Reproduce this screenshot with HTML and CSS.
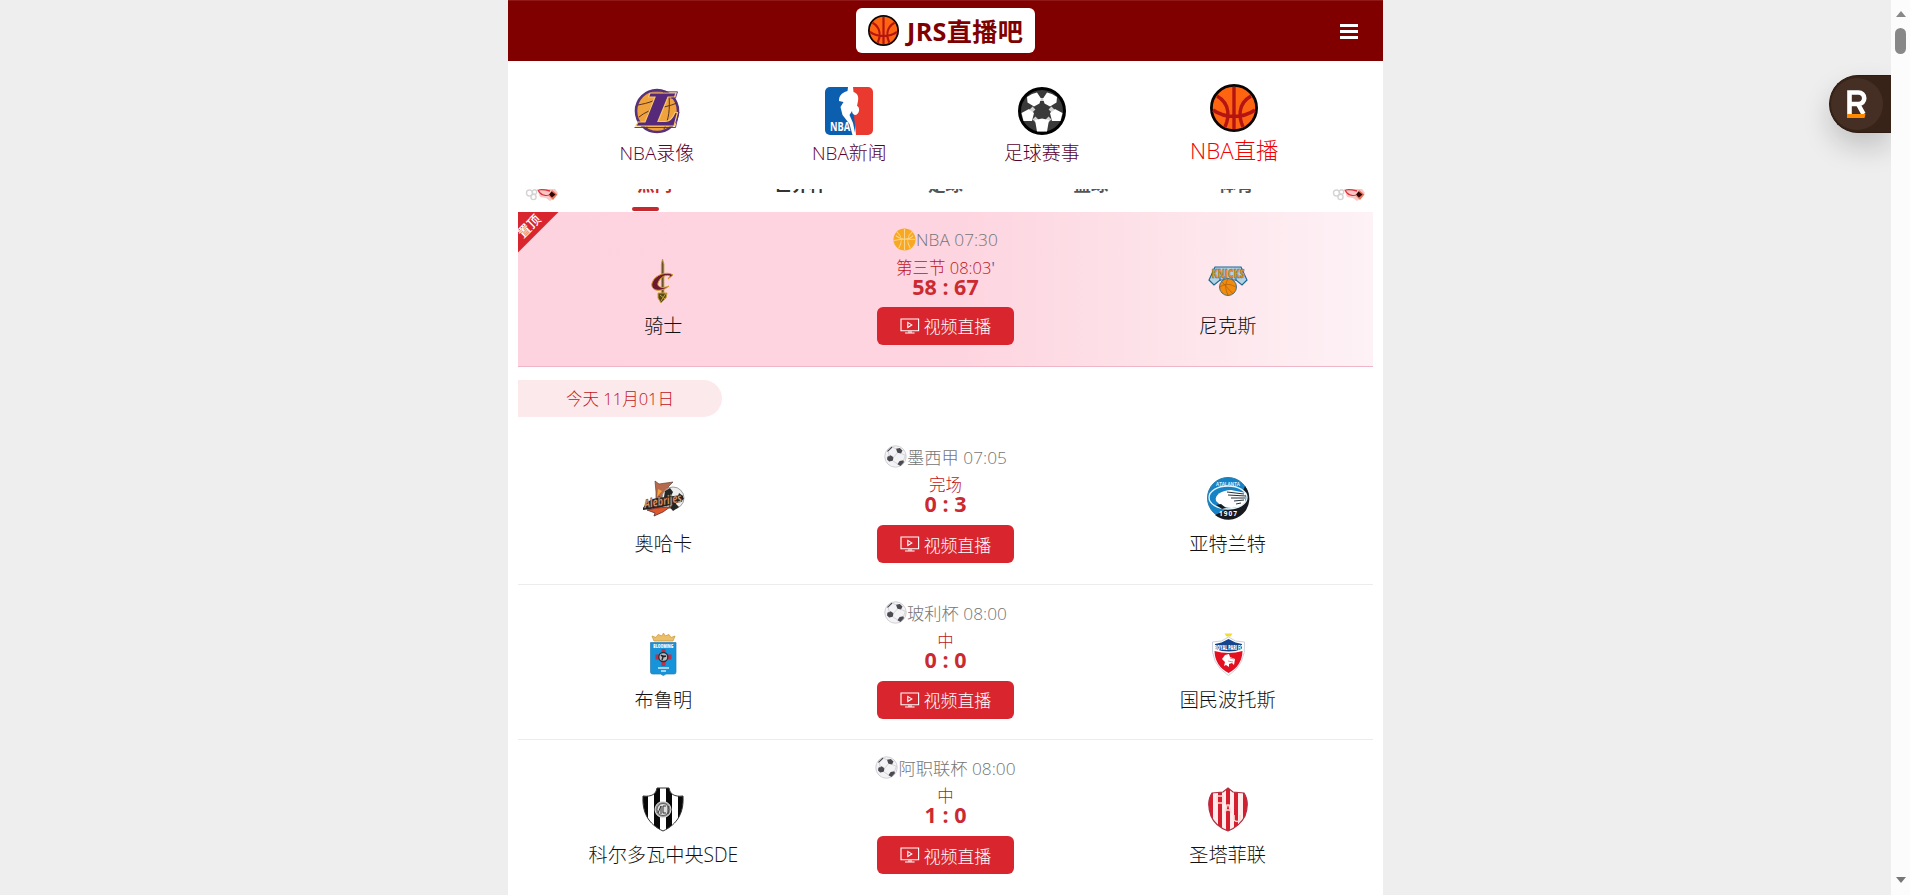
FILE: index.html
```html
<!DOCTYPE html>
<html lang="zh-CN">
<head>
<meta charset="utf-8">
<title>JRS直播吧</title>
<link rel="stylesheet" href="styles.css">
</head>
<body>
<svg class="defs" width="0" height="0" aria-hidden="true">
  <symbol id="basketball" viewBox="0 0 48 48">
    <circle cx="24" cy="24" r="22.6" fill="#ff6411" stroke="#0a0504" stroke-width="2.8"/>
    <path d="M24 3v42M3 26c12 8.500 30 8.500 42 0M7 12c14 8 12 22 8 31M41 12c-14 8-12 22-8 31" fill="none" stroke="#b51512" stroke-width="3.400"/>
  </symbol>
  <symbol id="soccer" viewBox="0 0 24 24">
    <circle cx="12" cy="12" r="11.200" fill="#f3f3f6" stroke="#cdcdd2" stroke-width="1"/>
    <path d="M3 6.500 7.800 1.800 9 2.400 4.200 7zM12.500 4l4-.8 2.800 2.600-1.500 3-3.800-.6zM3.500 12.200l3.400-1.500 3 2.200-.7 3.600-3.800.6-2.200-2zM14 20l2.300-3.400 4-.8.5 2.200-3.600 4z" fill="#4a4a50"/>
    <path d="M9.900 12.900 14 8.200M9.200 16.500 14.500 20M20.500 15.800l1.800-5M17.800 8.800l4.500 2M4.500 6.800l1 5M9 2.400 12.800 4" fill="none" stroke="#c9c9ce" stroke-width=".8"/>
  </symbol>
  <symbol id="tv" viewBox="0 0 20 16">
    <path d="M1 1h17.600v11.800H1zM5 15h9.600" fill="none" stroke="#fff" stroke-width="1.100"/>
    <path d="M7.800 4.400v5l4-2.500zM8 14h4" fill="none" stroke="#fff" stroke-width="1.100"/>
  </symbol>
  <symbol id="flame" viewBox="0 0 34 14">
    <g fill="none" stroke="#d4d4d4" stroke-width="1.400"><circle cx="4.500" cy="4" r="3"/><circle cx="9.500" cy="3" r="2.200"/><circle cx="8.500" cy="8" r="2.600"/></g>
    <path d="M12 0h18l3 4-5 6-3 2-4-3-6-1z" fill="#fbc6c6"/>
    <path d="M14 1c3-1 7 0 11 1M15 4c2 2 6 3 9 2M13 1l2 3" fill="none" stroke="#dd3038" stroke-width="1.300"/>
    <path d="M27 1l5.500 4.500L28 11l-4-4z" fill="#ee7256"/><path d="M26.500 2.500 30.500 5.500l-3.500 3-3-3z" fill="#2d0707"/>
  </symbol>
</svg>

<main class="page">
  <header class="header">
    <a class="brand"><svg class="brand-ball"><use href="#basketball"/></svg><span>JRS直播吧</span></a>
    <div class="menu"><i></i><i></i><i></i></div>
  </header>

  <nav class="quick">
    <a class="quick-item">
      <svg viewBox="0 0 48 48"><circle cx="24" cy="24" r="21" fill="#f0a23c" stroke="#56317c" stroke-width="2.600"/><path d="M5 18c10-2 20-4 26-13M6 30c12-10 24-8 38-14M31 6c-14 10-18 22-17 36M36 8c1 14 0 24-5 34" fill="none" stroke="#593223" stroke-width="1"/><path d="M17 6h26l-1.500 4H35L25 34.500h7c5 0 8-4 10-9h2.500L41 39H3l2-4h7L22 10h-6.500z" fill="#56297b" stroke="#f8c768" stroke-width="1.200"/><path d="M15.500 4.800H44.500l-2 6.300h-5M1.500 40.500H42.500l3.500-15.500" fill="none" stroke="#56297b" stroke-width=".9"/></svg>
      <span>NBA录像</span>
    </a>
    <a class="quick-item">
      <svg viewBox="0 0 48 48"><defs><clipPath id="nba"><rect width="48" height="48" rx="5"/></clipPath></defs><g clip-path="url(#nba)"><path fill="#0b5fae" d="M0 0h30v48H0z"/><path fill="#ea3a30" d="M26 0h22v48H31z"/><path d="M23 0h5l.5 5c3.500 1 5.500 4 4.500 9l-1 5c3 1 3 7-1 9-3 0-4-2-4-4l-2.500 4 3.500 8 2.500 12h-3l-3-11-7-9-2-8 3-5-4.500-1c0-5 2-8 8.500-10z" fill="#fff"/><text x="5" y="44" font-size="12.500" font-weight="700" textLength="20" lengthAdjust="spacingAndGlyphs" fill="#fff">NBA</text></g></svg>
      <span>NBA新闻</span>
    </a>
    <a class="quick-item">
      <svg viewBox="0 0 48 48"><circle cx="24" cy="24" r="22.500" fill="#3a3a3a" stroke="#000" stroke-width="3"/><path d="M24 14v-3M16 21l-3 3M32 21l3 3M16 31l3 3M32 31l-3 3" stroke="#d2d2d2" stroke-width="4"/><path d="M9 10q5-4 10-4.500l4 6-1.500 5-5.500 3-6.500-4zM39 10q-5-4-10-4.500l-4 6 1.500 5 5.500 3 6.500-4zM3.500 26l7.500-4 5 4-2 8H5.500zM44.500 26 37 22l-5 4 2 8h8.500zM17 33l7-1.500 7 1.500-2 11.500H19z" fill="#fff"/></svg>
      <span>足球赛事</span>
    </a>
    <a class="quick-item hot"><svg><use href="#basketball"/></svg><span>NBA直播</span></a>
  </nav>

  <div class="tabs">
    <svg class="flame"><use href="#flame"/></svg>
    <div class="tab-list"><div class="tab active">热门</div><div class="tab strong">世界杯</div><div class="tab">足球</div><div class="tab">篮球</div><div class="tab">体育</div></div>
    <svg class="flame"><use href="#flame"/></svg>
  </div>

  <section class="matches">
    <article class="match pinned">
      <div class="ribbon"><span>置顶</span></div>
      <div class="team"><svg viewBox="0 0 44 46"><path d="M21.500 1 22.900 6v30h-2.500V6z" fill="#6b5426" stroke="#c59b31" stroke-width=".8"/><path d="M32 17c-5-4-18-1-21 8-2 8 9 10 17 3-7 3-12 1-11-3 2-6 8-9 12-7l-2 3z" fill="#6b1730" stroke="#d99c25" stroke-width="1"/><path d="M17 35h9l-1 5-5 5-3-5zM19 37l5 4M25 35l-5 8" fill="#5b4715" stroke="#c6a23b" stroke-width="1"/></svg><span>骑士</span></div>
      <div class="info">
        <div class="league"><svg viewBox="0 0 24 24"><circle cx="12" cy="12" r="11.500" fill="#f8a823"/><path d="M12 1v22M1 13c7-2 14-2 22-1M4 4c6 5 6 10 2 17M20 4c-6 5-6 10-2 17M3 8c6 5 13 5 18 0" fill="none" stroke="#fbd58b" stroke-width="1.100"/></svg>NBA 07:30</div>
        <div class="status">第三节 08:03<b>'</b></div><div class="score">58 : 67</div>
        <a class="watch"><svg><use href="#tv"/></svg>视频直播</a>
      </div>
      <div class="team"><svg viewBox="0 0 44 46"><path d="M9 9h26l6 13-5 5-6-5H14l-6 5-5-5z" fill="#b4d2e2" stroke="#1d6796" stroke-width="1.200"/><path d="M14 18v5M18 18v5M26 18v5M30 18v5" stroke="#1d6796" stroke-width="1"/><text x="22" y="20" text-anchor="middle" font-size="13" font-weight="800" textLength="33" lengthAdjust="spacingAndGlyphs" fill="#ee8d1d" stroke="#31637e" stroke-width=".4">KNICKS</text><circle cx="22" cy="29" r="8.500" fill="#f28b0c" stroke="#3c6779" stroke-width=".9"/><path d="M16 24l11 12M14 29c6-4 10-3 16 0M22 21c-3 5-3 10 0 16" fill="none" stroke="#a65f13" stroke-width=".7"/></svg><span>尼克斯</span></div>
    </article>

    <h2 class="date">今天 11月01日</h2>

    <article class="match">
      <div class="team"><svg viewBox="0 0 44 46"><path d="M14 5l4 3 14-2-5 5 3 5-8 6-7 3 0-9z" fill="#b76a4b" stroke="#694133" stroke-width=".7"/><path d="M17 13l4 2-5 6z" fill="#f3a33c"/><circle cx="32" cy="22" r="11" fill="#eee" stroke="#888" stroke-width=".8"/><path d="M24 15l5-3 3 4-3 6-6-1zM38 17l4 3-1 6-5-2zM28 30l6-3 4 4-6 4z" fill="#252525"/><path d="M2 32q5-9 14-10l25-3 2 4-9 5-17 4-15 2z" fill="#252120"/><text x="22" y="29" text-anchor="middle" font-size="12" font-style="italic" font-weight="700" textLength="38" lengthAdjust="spacingAndGlyphs" transform="rotate(-10 22 26)" fill="#efaa78" stroke="#3a2a24" stroke-width=".4">Alebrijes</text><path d="M6 34l9-2 14-1-7 5-9 4 1-3z" fill="#df572a" stroke="#5b2b31" stroke-width=".8"/></svg><span>奥哈卡</span></div>
      <div class="info"><div class="league"><svg><use href="#soccer"/></svg>墨西甲 07:05</div><div class="status">完场</div><div class="score">0 : 3</div><a class="watch"><svg><use href="#tv"/></svg>视频直播</a></div>
      <div class="team"><svg viewBox="0 0 44 46"><circle cx="22" cy="22" r="20.500" fill="#1583c5" stroke="#247cad" stroke-width="1"/><path d="M39 10A21 21 0 0 1 9 39c11-5 24-12 30-29z" fill="#171b1f"/><ellipse cx="22" cy="21.500" rx="19" ry="11.500" fill="#1583c5" stroke="#e6f4fa" stroke-width="1.300"/><path d="M10 25c-2-6 6-11 15-11l15 3-1 9c-5 6-12 7-20 5-4-1-6-3-9-6z" fill="#fff"/><path d="M21 16l17 2M22 19l18 1M25 22h14M28 25l10-1M30 28l5-1" stroke="#26323b" stroke-width="1"/><path d="M10 29l5-1 5 4-4 1z" fill="#171b1f"/><text x="22" y="9.500" text-anchor="middle" font-size="5.500" font-weight="700" textLength="24" lengthAdjust="spacingAndGlyphs" fill="#d8effa">ATALANTA</text><text x="22" y="39.500" text-anchor="middle" font-size="6.500" font-weight="700" textLength="18" fill="#fff">1907</text></svg><span>亚特兰特</span></div>
    </article>

    <article class="match">
      <div class="team"><svg viewBox="0 0 44 46"><path d="M13 9 11 4l4 1.500 2-3 4 1.500 1.500-3L24 4l4-1.500 2 3L34 4l-2 5z" fill="#ecc06a" stroke="#d19a40" stroke-width=".8"/><path d="M9.500 10.500h25.500V40q0 2-2 2h-8l-2.700 1.500L19.500 42h-8q-2 0-2-2z" fill="#1693d9" stroke="#2a7bb1" stroke-width=".7"/><path d="M20.500 17h4v5.500h6v5h-6V34h-4v-6.500h-6v-5h6z" fill="#c03048"/><circle cx="22.300" cy="25" r="4.500" fill="#b9c0c6" stroke="#202f3e" stroke-width="1.300"/><path d="M20 23l2 2 3-1M22 25l-1 3" stroke="#222" stroke-width="1.400"/><text x="22.300" y="16" text-anchor="middle" font-size="5.500" font-weight="800" textLength="20" lengthAdjust="spacingAndGlyphs" fill="#fff">BLOOMING</text><path d="M17 36h11M20 39h5" stroke="#cdebf8" stroke-width="1.500"/></svg><span>布鲁明</span></div>
      <div class="info"><div class="league"><svg><use href="#soccer"/></svg>玻利杯 08:00</div><div class="status">中</div><div class="score">0 : 0</div><a class="watch"><svg><use href="#tv"/></svg>视频直播</a></div>
      <div class="team"><svg viewBox="0 0 44 46"><path d="M18.500 1.500h8l-2 3h-4z" fill="#f4dc31"/><path d="M22.500 5l7 4 9 1q2 22-16 33.500Q4 32 6.500 10l9-1z" fill="#fff" stroke="#c5cbd6" stroke-width=".9"/><path d="M22.500 7l7 3.500 6.500 1.500v5q-13 5-27 0v-5l6.500-1.500z" fill="#15458d"/><path d="M8.500 19q14 4 28 0-.5 15-14 22Q9 34 8.500 19z" fill="#e21020"/><path d="M19 23l4-1 1 3 5 2-1 6-2-2-3 1v3l-3-2-2 1 1-4-3-3z" fill="#fff"/><path d="M24 26l4 1M22 29l5 1" stroke="#e88484"/><text x="22.500" y="17.500" text-anchor="middle" font-size="6" font-weight="800" textLength="28" lengthAdjust="spacingAndGlyphs" fill="#fff">ROYAL PARI FC</text></svg><span>国民波托斯</span></div>
    </article>

    <article class="match">
      <div class="team"><svg viewBox="0 0 44 46"><defs><clipPath id="sde"><path id="sdep" d="M16 1h12c1 6 5 9 14 8 1 16-5 28-20 35C7 37 1 25 2 9c9 1 13-2 14-8z"/></clipPath></defs><g clip-path="url(#sde)"><path fill="#fff" d="M0 0h44v46H0z"/><path d="M0 0h7v46H0zM13 0h6v46h-6zM25 0h6v46h-6zM37 0h7v46h-7z" fill="#080808"/></g><use href="#sdep" fill="none" stroke="#333" stroke-width="1"/><circle cx="22" cy="22.500" r="8" fill="#999" stroke="#e6e6e6" stroke-width="1"/><circle cx="22" cy="22.500" r="6" fill="#ddd" stroke="#333" stroke-width=".7"/><path d="M17 26l3-7v8M25 19h-3v7h3M27 19v8" stroke="#333" fill="none"/></svg><span>科尔多瓦中央SDE</span></div>
      <div class="info"><div class="league"><svg><use href="#soccer"/></svg>阿职联杯 08:00</div><div class="status">中</div><div class="score">1 : 0</div><a class="watch"><svg><use href="#tv"/></svg>视频直播</a></div>
      <div class="team"><svg viewBox="0 0 44 46"><defs><clipPath id="union"><path id="unionp" d="M22 1l5 4 11 1q6 9 1 23-5 10-17 15Q9 39 5 29 0 15 6 6l11-1z"/></clipPath></defs><g clip-path="url(#union)"><path fill="#ffeceb" d="M0 0h44v46H0z"/><path d="M1 0h6v46H1zM12 0h4v46h-4zM20 0h4v46h-4zM28 0h4v46h-4zM37 0h6v46h-6z" fill="#d61e31"/></g><use href="#unionp" fill="none" stroke="#ae3040" stroke-width="1.200"/><path d="M11 16V9h6v7h-6M19 26l2-8h2l2 8M19 23h6M28 28v5q3 3 6 0v-5" fill="none" stroke="#ffdad5" stroke-width="1.600"/></svg><span>圣塔菲联</span></div>
    </article>
  </section>
</main>

<aside class="widget"><div class="disc"><svg viewBox="0 0 22 30"><path d="M2.500 25V2.500h9a5.500 5.500 0 0 1 0 11.500H3M11 14l5.500 10" fill="none" stroke="#fff" stroke-width="4.600"/><path d="M0 24h18.500l-1 4H0z" fill="#ff8a00"/></svg></div></aside>
<div class="scroll"><i class="up"></i><i class="thumb"></i><i class="down"></i></div>
</body>
</html>
```
FILE: styles.css
```css
* { box-sizing: border-box; }
html, body { height: 100%; }
body {
  margin: 0;
  background: #eee;
  overflow: hidden;
  padding-right: 19px;
  font-family: "Open Sans", "Noto Sans", "Noto Sans CJK SC", sans-serif;
  font-weight: 300;
  color: #333;
}
.defs { position: absolute; }
svg { display: block; flex: none; }
.page { width: 875px; height: 895px; margin: 0 auto; background: #fff; overflow: hidden; }

.header {
  height: 61px;
  background: #800000;
  border-top: 1px solid #8f1818;
  display: grid;
  grid-template-columns: 1fr auto 1fr;
  align-items: start;
  padding-top: 7px;
}
.brand {
  grid-column: 2;
  width: 179px;
  height: 45px;
  background: #fff;
  border-radius: 6px;
  display: flex;
  align-items: center;
  padding: 0 0 0 12px;
  gap: 8px;
  color: #800000;
  font-size: 25.2px;
  line-height: 47px;
  font-weight: 700;
  white-space: nowrap;
}
.brand-ball { width: 31px; height: 31px; }
.brand span { letter-spacing: .3px; padding-top: 1px; }
.menu { justify-self: end; margin: 16px 25px 0 0; display: grid; gap: 3px; }
.menu i { width: 18px; height: 3px; background: #fff; }

.quick { display: flex; justify-content: center; height: 128px; padding-top: 26px; }
.quick-item {
  width: 192.5px;
  display: flex;
  flex-direction: column;
  align-items: center;
  color: #5a002c;
  font-size: 18.9px;
  line-height: 28px;
}
.quick-item svg { width: 48px; height: 48px; }
.quick-item span { margin-top: 4px; }
.quick-item.hot { color: #f00000; font-size: 22.4px; line-height: 30px; margin-top: -3px; }

.tabs {
  display: flex;
  justify-content: space-between;
  height: 22.5px;
  overflow: hidden;
  padding: 0 17px;
  font-size: 17.5px;
  font-weight: 700;
  color: #555;
}
.tabs .flame { width: 34px; height: 14px; }
.tab-list { display: flex; width: 727px; }
.tab { flex: 1; text-align: center; line-height: 22px; margin-top: -16px; height: 38px; }
.tab.strong { color: #333; }
.tab.active { color: #c5282d; }
.tab.active::after { content: ""; display: block; width: 27px; height: 4px; border-radius: 2px; background: #c5282d; margin: 12px auto 0 50px; }

.matches { padding: 0 10px; }
.match {
  position: relative;
  height: 155.6px;
  display: grid;
  grid-template-columns: 34% 32% 34%;
  border-bottom: 1px solid #ececec;
}
.match:last-child { border-bottom: 0; }
.pinned {
  background: linear-gradient(90deg, #fdd3df 0%, #fdd5e0 52%, #fde1e8 72%, #fdf2f6 100%);
  border-bottom-color: #efb6c8;
}
.ribbon {
  position: absolute;
  inset: 0 auto auto 0;
  width: 41px;
  height: 41px;
  background: #d9262e;
  clip-path: polygon(0 0, 100% 0, 0 100%);
  color: #fff;
  font-size: 13px;
  font-weight: 500;
  line-height: 16px;
}
.ribbon span { display: block; width: 30px; margin: 6px 0 0 -4px; text-align: center; transform: rotate(-45deg); }
.team { display: flex; flex-direction: column; align-items: center; padding-top: 47px; font-size: 19.2px; line-height: 28px; color: #111; }
.team svg { width: 44px; height: 46px; margin-bottom: 8px; }
.pinned .team { padding-top: 46px; }
.info { display: flex; flex-direction: column; align-items: center; padding-top: 15px; white-space: nowrap; }
.league { display: flex; align-items: center; height: 25px; color: #757575; font-size: 17.3px; }
.league svg { width: 23px; height: 23px; }
.status { height: 20px; margin-top: 5px; line-height: 21px; font-size: 16.5px; color: #c0161c; }
.status b { font-weight: 400; color: #1e7fc0; }
.score { height: 21px; line-height: 19px; font-size: 21.5px; font-weight: 700; color: #cb2a31; }
.watch {
  width: 137px;
  height: 38px;
  margin-top: 10px;
  border-radius: 6px;
  background: #d9262e;
  color: #fff;
  font-size: 16.9px;
  display: flex;
  align-items: center;
  justify-content: center;
  gap: 4px;
}
.pinned .watch { margin-top: 9px; }
.watch svg { width: 20px; height: 16px; }

.date {
  width: 204px;
  height: 37px;
  margin: 13px 0 12px;
  border-radius: 0 19px 19px 0;
  background: #fce9eb;
  color: #c0161c;
  font-size: 16.5px;
  font-weight: 300;
  line-height: 37px;
  text-align: center;
}

.widget {
  position: fixed;
  right: 19px;
  top: 75px;
  width: 62px;
  height: 58px;
  border-radius: 29px 0 0 29px;
  background: #382319;
  border: 1px solid #2e1b12;
  border-right: 0;
  box-shadow: 0 14px 28px rgba(0, 0, 0, .18);
  padding: 2px 0 0 1px;
}
.disc { width: 52px; height: 52px; border-radius: 50%; background: #452e23; padding: 12px 0 0 16px; }
.disc svg { width: 22px; height: 30px; }
.scroll {
  position: fixed;
  inset: 0 0 0 auto;
  width: 19px;
  background: #fcfcfc;
  display: flex;
  flex-direction: column;
  align-items: center;
}
.up, .down { border: 5.5px solid transparent; }
.up { border-top: 0; border-bottom: 6px solid #888; margin-top: 11px; }
.thumb { width: 11px; height: 26px; border-radius: 6px; background: #888; margin-top: 11px; }
.down { border-bottom: 0; border-top: 6px solid #777; margin-top: auto; margin-bottom: 12px; }
```
